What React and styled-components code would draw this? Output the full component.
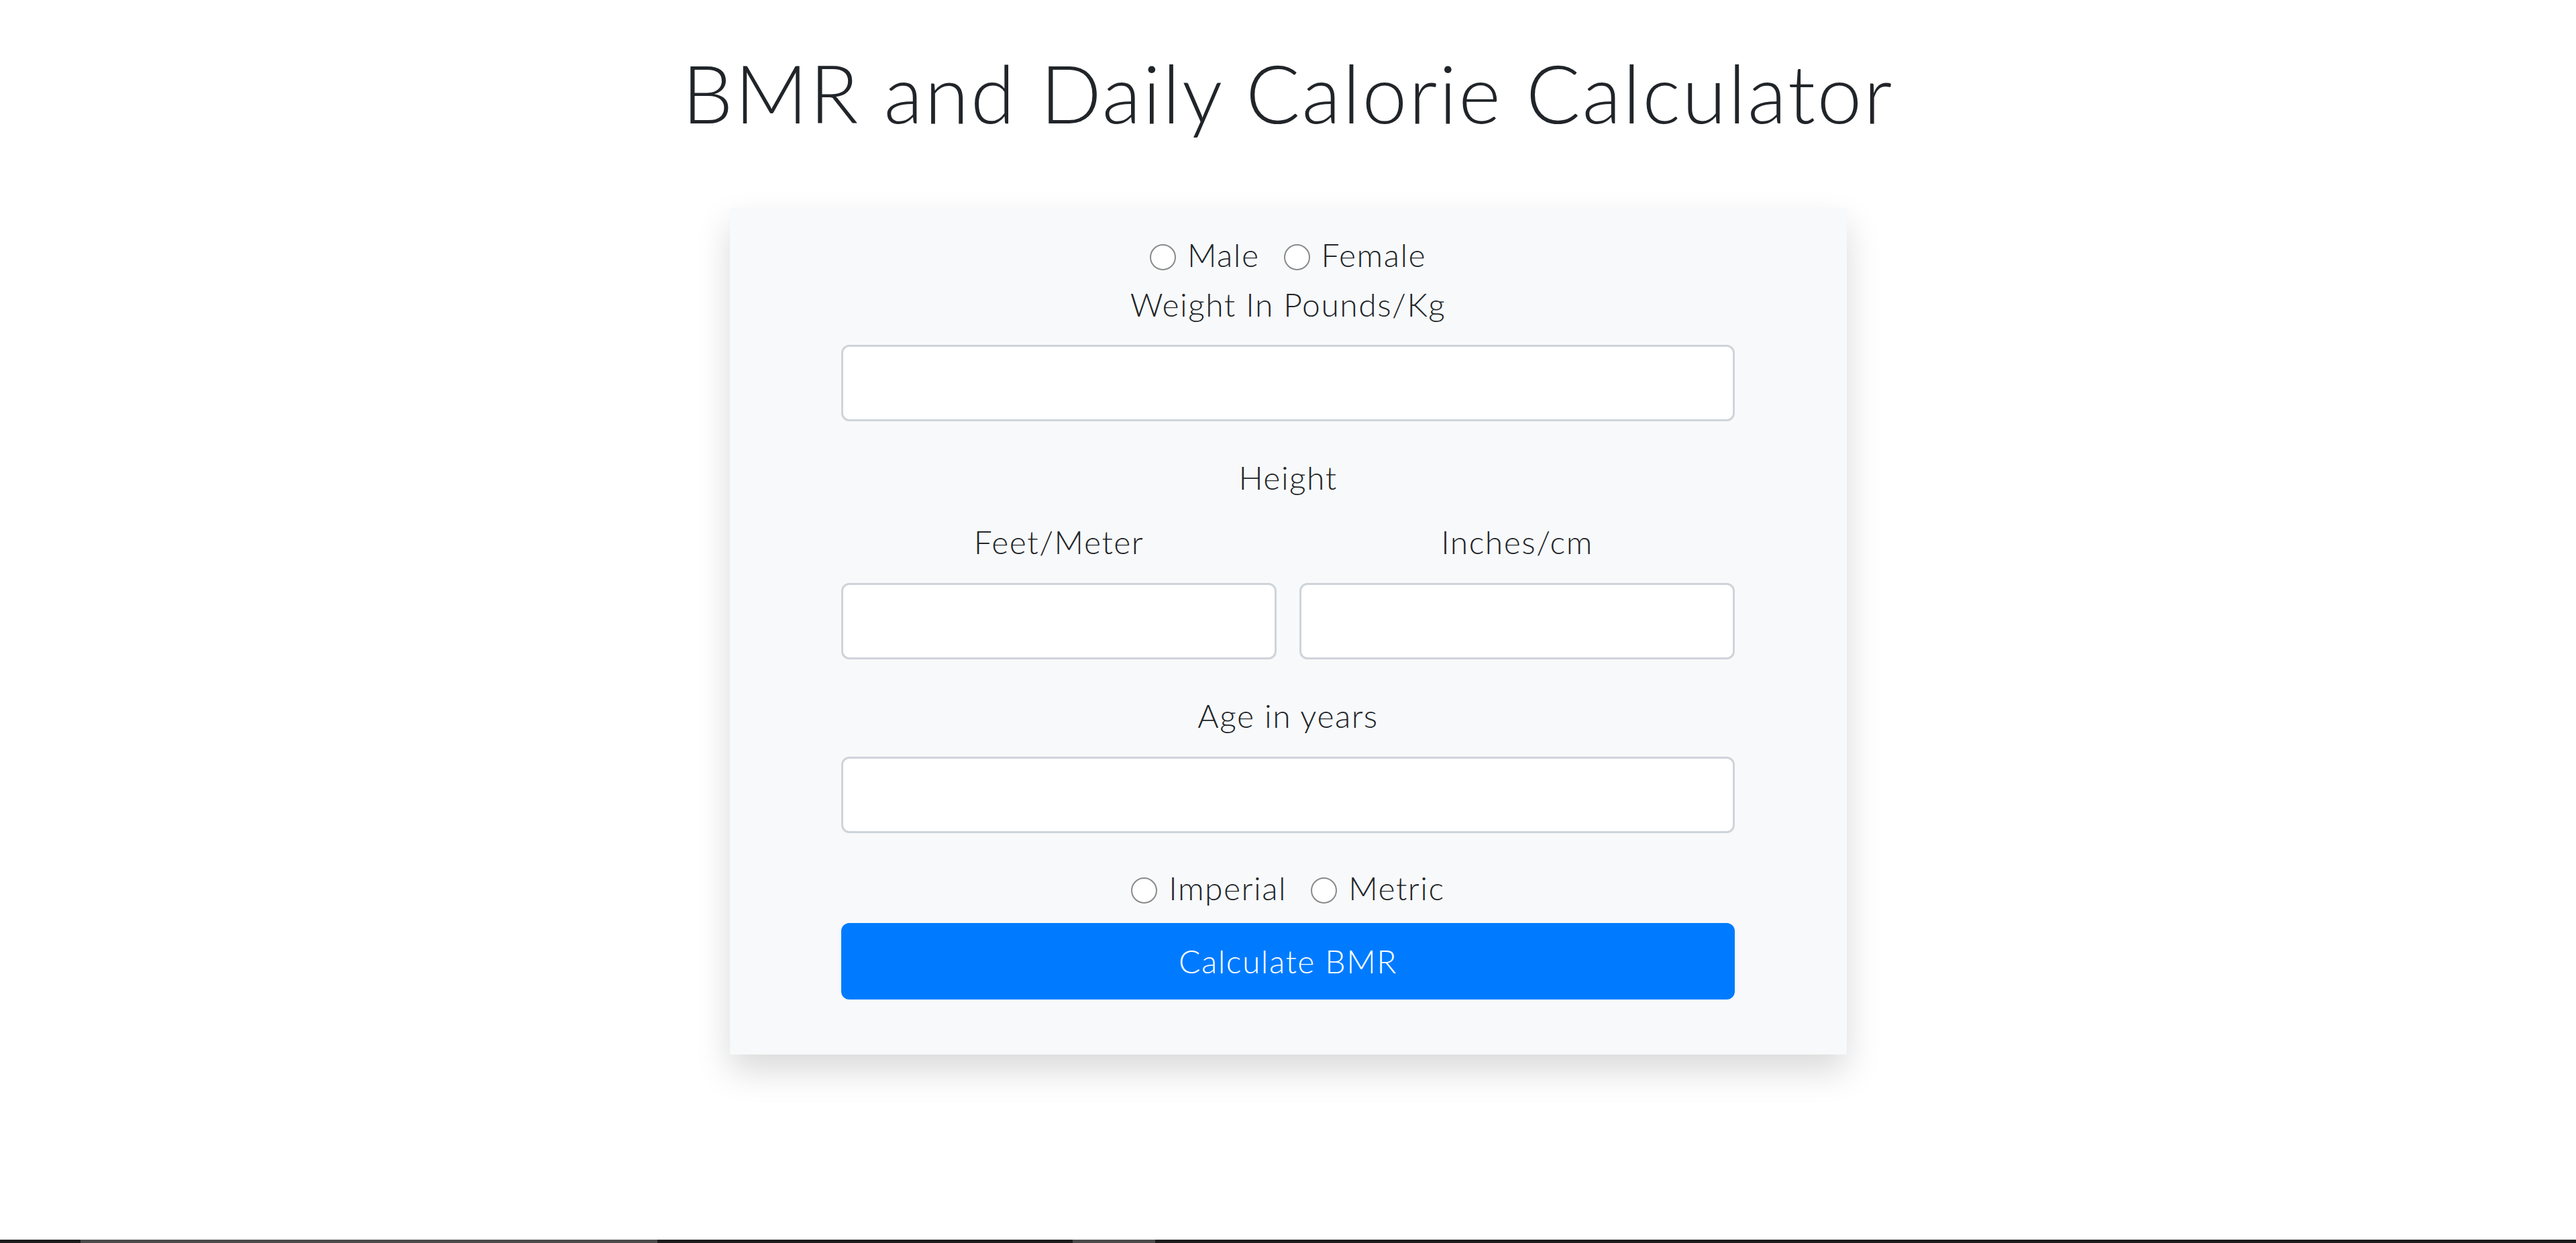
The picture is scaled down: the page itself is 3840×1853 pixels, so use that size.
import React from "react";
import styled, { createGlobalStyle } from "styled-components";

const GlobalStyle = createGlobalStyle`
    html, body {
        margin: 0;
        padding: 0;
        height: 100%;
        background: #fff;
    }
    body {
        font-family: "Lato", "Open Sans", sans-serif;
        font-weight: 300;
        color: #212529;
        letter-spacing: 1.5px;
    }
    #root {
        min-height: 100%;
        display: flex;
        flex-direction: column;
    }
`;

function RadioGroup({ name, options }) {
    return (
        <RadioRow>
            {options.map((option) => (
                <RadioOption key={option}>
                    <RadioCircle type="radio" name={name} value={option} />
                    <span>{option}</span>
                </RadioOption>
            ))}
        </RadioRow>
    );
}

function App() {
    return (
        <>
            <GlobalStyle />
            <Page>
                <Title>BMR and Daily Calorie Calculator</Title>
                <Card>
                    <Form onSubmit={(e) => e.preventDefault()}>
                        <RadioGroup name="gender" options={["Male", "Female"]} />
                        <Label $top={2}>Weight In Pounds/Kg</Label>
                        <Input type="text" $top={24} />

                        <Label $top={48}>Height</Label>
                        <TwoColumns $top={24}>
                            <Column>
                                <Label>Feet/Meter</Label>
                                <Input type="text" $top={25} />
                            </Column>
                            <Column>
                                <Label>Inches/cm</Label>
                                <Input type="text" $top={25} />
                            </Column>
                        </TwoColumns>

                        <Label $top={48}>Age in years</Label>
                        <Input type="text" $top={25} />

                        <Spacer $h={46} />
                        <RadioGroup name="unit" options={["Imperial", "Metric"]} />
                        <SubmitButton type="submit">Calculate BMR</SubmitButton>
                    </Form>
                </Card>
            </Page>
            <BottomStrip>
                <StripSegment $w={120} />
                <StripSegment $w={860} $light />
                <StripSegment $w={619} />
                <StripSegment $w={123} $light />
                <StripSegment $grow />
            </BottomStrip>
        </>
    );
}

const Page = styled.main`
    flex: 1;
    display: flex;
    flex-direction: column;
    align-items: center;
`;
const Title = styled.h1`
    margin: 66px 0 0;
    font-size: 120px;
    font-weight: 300;
    line-height: 1.2;
    letter-spacing: 2.6px;
    color: #212529;
    text-align: center;
`;
const Card = styled.section`
    width: 1665px;
    margin-top: 100px;
    padding: 34px 0 82px;
    background-color: #f8f9fa;
    box-shadow: 0 24px 48px rgba(0, 0, 0, 0.15);
    box-sizing: border-box;
`;
const Form = styled.form`
    width: 1332px;
    margin: 0 auto;
    display: flex;
    flex-direction: column;
`;
const RadioRow = styled.div`
    display: flex;
    justify-content: center;
    align-items: center;
    gap: 36px;
    font-size: 48px;
    line-height: 72px;
`;
const RadioOption = styled.label`
    display: flex;
    align-items: center;
    gap: 17px;
`;
const RadioCircle = styled.input`
    appearance: none;
    width: 39px;
    height: 39px;
    margin: 6px 0 0;
    border: 2px solid #8a8a8a;
    border-radius: 50%;
    background: #fff;
    box-sizing: border-box;
`;
const Label = styled.label`
    display: block;
    margin-top: ${(p) => p.$top || 0}px;
    font-size: 48px;
    line-height: 72px;
    text-align: center;
`;
const Input = styled.input`
    display: block;
    width: 100%;
    height: 114px;
    margin-top: ${(p) => p.$top || 0}px;
    padding: 18px 36px;
    border: 3px solid #ced4da;
    border-radius: 12px;
    background: #fff;
    font-family: inherit;
    font-size: 48px;
    box-sizing: border-box;
`;
const TwoColumns = styled.div`
    display: grid;
    grid-template-columns: 1fr 1fr;
    column-gap: 34px;
    margin-top: ${(p) => p.$top || 0}px;
`;
const Column = styled.div`
    display: flex;
    flex-direction: column;
`;
const Spacer = styled.div`
    height: ${(p) => p.$h}px;
`;
const SubmitButton = styled.button`
    margin-top: 16px;
    height: 114px;
    border: 3px solid #007bff;
    border-radius: 12px;
    background-color: #007bff;
    color: #fff;
    font-family: inherit;
    font-weight: 300;
    font-size: 48px;
    line-height: 72px;
    letter-spacing: 1.5px;
    cursor: pointer;
`;
const BottomStrip = styled.div`
    display: flex;
    height: 5px;
    background: #1c1c1c;
`;
const StripSegment = styled.div`
    width: ${(p) => (p.$w ? `${p.$w}px` : "auto")};
    flex: ${(p) => (p.$grow ? 1 : "none")};
    background: ${(p) => (p.$light ? "#4b4b4b" : "#1c1c1c")};
`;

export default App;
